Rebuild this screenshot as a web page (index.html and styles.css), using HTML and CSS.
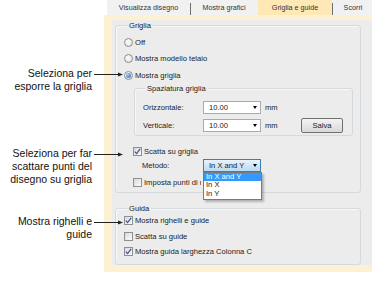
FILE: index.html
```html
<!DOCTYPE html>
<html lang="it">
<head>
    <meta charset="UTF-8">
    <title>Griglia e guide</title>
    <link rel="stylesheet" href="styles.css">
</head>
<body>
<div class="page">
    <div class="notes">
        <div class="note">
            <p>Seleziona per<br>esporre la griglia</p>
            <svg class="arrow" width="31" height="13" viewBox="0 0 31 13"><line x1="1" y1="7.5" x2="26" y2="7.5"/><polygon points="25,5.5 30,7.5 25,9.5"/></svg>
        </div>
        <div class="note note-snap">
            <p>Seleziona per far<br>scattare punti del<br>disegno su griglia</p>
            <svg class="arrow" width="31" height="13" viewBox="0 0 31 13"><line x1="1" y1="7.5" x2="26" y2="7.5"/><polygon points="25,5.5 30,7.5 25,9.5"/></svg>
        </div>
        <div class="note note-guide">
            <p>Mostra righelli e<br>guide</p>
            <svg class="arrow" width="31" height="13" viewBox="0 0 31 13"><line x1="1" y1="7.5" x2="26" y2="7.5"/><polygon points="25,5.5 30,7.5 25,9.5"/></svg>
        </div>
    </div>

    <div class="window">
        <div class="tabs">
            <div class="tab tab-view">Visualizza disegno</div>
            <div class="tab tab-graphics sep">Mostra grafici</div>
            <div class="tab tab-grid active">Griglia e guide</div>
            <div class="tab tab-scroll sep">Scorri</div>
        </div>

        <div class="frame">
            <div class="sheet">
                <div class="group group-grid">
                    <div class="group-title">Griglia</div>
                    <div class="options">
                        <div class="opt"><span class="radio"></span>Off</div>
                        <div class="opt"><span class="radio"></span>Mostra modello telaio</div>
                        <div class="opt"><span class="radio on"><span class="dot"></span></span>Mostra griglia</div>
                    </div>

                    <div class="group spacing">
                        <div class="group-title">Spaziatura griglia</div>
                        <div class="field">
                            <span class="field-label">Orizzontale:</span>
                            <div class="select"><span>10.00</span><i class="caret"></i></div>
                            <span class="unit">mm</span>
                        </div>
                        <div class="field field-second">
                            <span class="field-label">Verticale:</span>
                            <div class="select"><span>10.00</span><i class="caret"></i></div>
                            <span class="unit">mm</span>
                            <button class="btn">Salva</button>
                        </div>
                    </div>

                    <div class="check-row snap-row">
                        <span class="check"><svg width="7" height="7" viewBox="0 0 7 7"><path d="M0.8 3.6 L2.6 5.6 L6.2 0.9"/></svg></span>
                        Scatta su griglia
                    </div>
                    <div class="field method-row">
                        <span class="field-label method-label">Metodo:</span>
                        <div class="select-wrap">
                            <div class="select focused"><span>In X and Y</span><i class="caret"></i></div>
                            <ul class="dropdown">
                                <li class="picked">In X and Y</li>
                                <li>In X</li>
                                <li>In Y</li>
                            </ul>
                        </div>
                    </div>
                    <div class="check-row ref-row">
                        <span class="check"></span>
                        <span class="clipped">Imposta punti di riferimento</span>
                    </div>
                </div>

                <div class="group group-guide">
                    <div class="group-title">Guida</div>
                    <div class="guide-list">
                        <div class="check-row">
                            <span class="check"><svg width="7" height="7" viewBox="0 0 7 7"><path d="M0.8 3.6 L2.6 5.6 L6.2 0.9"/></svg></span>
                            Mostra righelli e guide
                        </div>
                        <div class="check-row">
                            <span class="check"></span>
                            Scatta su guide
                        </div>
                        <div class="check-row">
                            <span class="check"><svg width="7" height="7" viewBox="0 0 7 7"><path d="M0.8 3.6 L2.6 5.6 L6.2 0.9"/></svg></span>
                            Mostra guida larghezza Colonna C
                        </div>
                    </div>
                </div>
            </div>
        </div>
    </div>
</div>
</body>
</html>
```

FILE: styles.css
```css
* {
    box-sizing: border-box;
}

body {
    margin: 0;
    background: #fff;
    font-family: "Liberation Sans", Arial, sans-serif;
    color: #222;
    overflow: hidden;
}

.page {
    display: flex;
    width: 372px;
    height: 285px;
    overflow: hidden;
}

/* callouts on the left */
.notes {
    flex: 0 0 104px;
    min-width: 0;
    position: relative;
    z-index: 2;
    padding-top: 67px;
    font-size: 10.5px;
    line-height: 13px;
    color: #111;
}

.note {
    display: flex;
    width: 124px;
}

.note p {
    margin: 0;
    width: 92px;
    text-align: right;
}

.arrow {
    flex: none;
    margin-left: 1px;
}

.arrow line {
    stroke: #222;
    stroke-width: 1;
}

.arrow polygon {
    fill: #222;
}

.note-snap {
    margin-top: 54px;
}

.note-guide {
    margin-top: 29px;
}

/* dialog */
.window {
    flex: 0 0 300px;
    display: flex;
    flex-direction: column;
    font-size: 7.6px;
}

.tabs {
    display: flex;
    height: 15px;
    padding-left: 3px;
}

.tab {
    display: flex;
    align-items: center;
    justify-content: center;
    background-color: #f1f1f1;
    color: #333;
    font-size: 7.2px;
}

.tab.sep {
    background-image: linear-gradient(#6f6f6f, #6f6f6f);
    background-size: 1px 12px;
    background-position: left 3px;
    background-repeat: no-repeat;
}

.tab-view { width: 83px; }
.tab-graphics { width: 68px; }
.tab-grid { width: 74px; }
.tab-scroll { width: 72px; padding-right: 30px; }

.tab.active {
    background-color: #fde8b6;
}

.frame {
    background: #fcf2d3;
    padding: 5px 0 7px 8px;
}

.sheet {
    height: 245px;
    background: #ececec;
    padding: 5px 0 0 3px;
    width: 292px;
}

.group {
    border: 1px solid #d3d9dc;
    border-radius: 3px;
    box-shadow: inset 1px 1px 0 #f8f8f8;
}

.group-title {
    width: fit-content;
    margin: -5px 0 0 3px;
    padding: 0 2px;
    line-height: 9px;
    background: #ececec;
}

.group-grid {
    width: 246px;
    padding: 0 0 3px 8px;
}

.options {
    padding-top: 4px;
}

.opt {
    display: flex;
    align-items: center;
    gap: 2px;
    height: 16.5px;
}

.radio {
    width: 9px;
    height: 9px;
    border: 1px solid #8d8d8d;
    border-radius: 50%;
    background: radial-gradient(circle at 40% 40%, #fdfdfd, #dcdcdc);
    display: flex;
    align-items: center;
    justify-content: center;
}

.dot {
    width: 5px;
    height: 5px;
    border-radius: 50%;
    background: radial-gradient(circle at 35% 35%, #9fd0ff, #1f5fbf);
}

.spacing {
    margin: 4.5px 7px 0 10px;
    padding: 0 9px 2.5px 8px;
}

.spacing .group-title {
    margin-left: 2px;
}

.field {
    display: flex;
    align-items: center;
    height: 14px;
    margin-top: 7px;
}

.field-second {
    margin-top: 4.5px;
}

.field-label {
    width: 60px;
}

.select {
    width: 58px;
    height: 13px;
    border: 1px solid #a7abb0;
    background: #fff;
    display: flex;
    align-items: center;
    justify-content: space-between;
    padding: 0 3px 0 5px;
}

.caret {
    border-left: 2.5px solid transparent;
    border-right: 2.5px solid transparent;
    border-top: 3px solid #000;
}

.unit {
    margin-left: 4px;
}

.btn {
    margin-left: auto;
    width: 42px;
    height: 15px;
    border: 1px solid #707070;
    border-radius: 2px;
    background: linear-gradient(#f4f4f4, #e6e6e6 50%, #d9d9d9);
    font: inherit;
    color: #222;
    padding: 0;
}

.check-row {
    display: flex;
    align-items: center;
    gap: 2px;
    height: 14px;
}

.check {
    flex: none;
    width: 9px;
    height: 9px;
    border: 1px solid #8e8f8f;
    background: linear-gradient(135deg, #d9d9d9, #fbfbfb);
    display: flex;
    align-items: center;
    justify-content: center;
}

.check path {
    fill: none;
    stroke: #3b55a0;
    stroke-width: 1.3;
}

.snap-row {
    margin: 8px 0 0 9px;
}

.method-row {
    margin-top: 0;
}

.method-label {
    margin-left: 18px;
    width: 61px;
}

.select-wrap {
    position: relative;
}

.select.focused {
    border-color: #3c7fb1;
    background: linear-gradient(#eaf4fc, #cfe6f9 50%, #b9dbf6);
}

.dropdown {
    position: absolute;
    top: 100%;
    left: 0;
    width: 59px;
    margin: 0;
    padding: 0;
    list-style: none;
    background: #fff;
    border: 1px solid #7a7a7a;
    box-shadow: 2px 2px 2px rgba(0, 0, 0, 0.25);
    z-index: 3;
}

.dropdown li {
    height: 8.7px;
    line-height: 8.7px;
    padding-left: 2px;
}

.dropdown .picked {
    background: #3399ff;
    color: #fff;
}

.ref-row {
    margin: 3px 0 0 9px;
}

.clipped {
    width: 57px;
    overflow: hidden;
    white-space: nowrap;
}

.group-guide {
    width: 246px;
    margin-top: 15px;
    padding: 0 0 4px 8px;
}

.guide-list .check-row {
    height: 15.5px;
}
```
